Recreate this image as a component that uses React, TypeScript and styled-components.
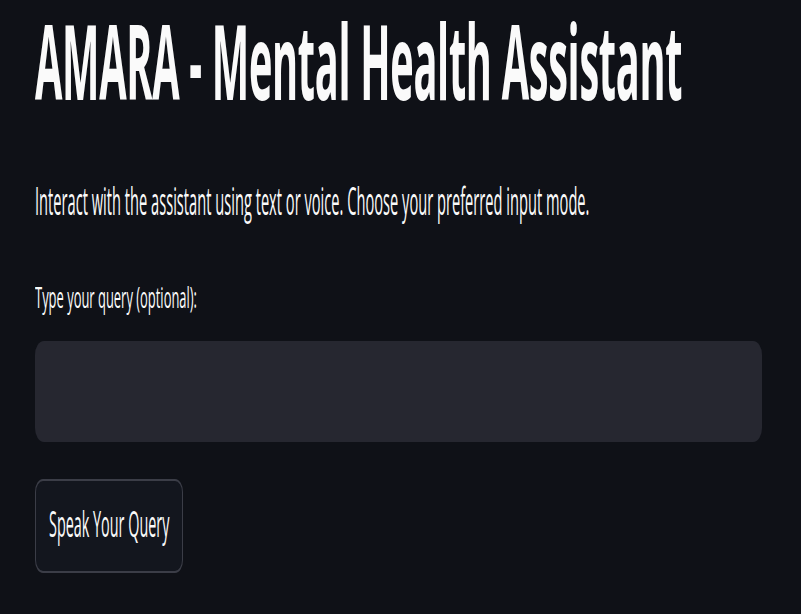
import React from "react";
import styled, { createGlobalStyle } from "styled-components";

const Global = createGlobalStyle`
  html, body { margin: 0; padding: 0; background: #0f1117; }
  body { font-family: "Open Sans", "Noto Sans", sans-serif; color: #fafafa; }
`;

const Page = styled.main`
  display: flex;
  flex-direction: column;
  align-items: flex-start;
  padding: 12px 39px 0 35px;
  min-height: 614px;
  box-sizing: border-box;
  background: #0f1117;
`;

const Stretch = styled.div<{ $size: number; $scale: number; $weight?: number }>`
  height: ${(p) => p.$size * p.$scale}px;
  font-size: ${(p) => p.$size}px;
  font-weight: ${(p) => p.$weight ?? 400};
  line-height: ${(p) => p.$size}px;
  white-space: nowrap;
  & > span {
    display: inline-block;
    transform: scaleY(${(p) => p.$scale});
    transform-origin: 0 0;
  }
`;

const Title = styled(Stretch)`
  color: #fafafa;
  letter-spacing: -0.3px;
`;

const Paragraph = styled(Stretch)`
  margin-top: 66px;
  color: #fafafa;
`;

const Label = styled(Stretch)`
  margin-top: 65px;
  color: #fafafa;
`;

const QueryInput = styled.textarea`
  margin-top: 28px;
  align-self: stretch;
  height: 101px;
  box-sizing: border-box;
  background: #262730;
  border: none;
  border-radius: 9px / 14px;
  outline: none;
  resize: none;
  color: #fafafa;
`;

const SpeakButton = styled.button`
  margin-top: 37px;
  width: 148px;
  height: 94px;
  box-sizing: border-box;
  display: flex;
  align-items: center;
  justify-content: flex-start;
  padding: 0 0 0 13px;
  background: #13161e;
  border-style: solid;
  border-color: #3b3d47;
  border-width: 2px 1px;
  border-radius: 8px / 13px;
  color: #fafafa;
  font-family: inherit;
  cursor: pointer;
`;

const ButtonText = styled(Stretch)`
  color: #fafafa;
`;

export default function App() {
  return (
    <>
      <Global />
      <Page>
        <Title $size={39.7} $scale={2.6} $weight={700}>
          <span>AMARA - Mental Health Assistant</span>
        </Title>
        <Paragraph $size={14.66} $scale={2.58}>
          <span>Interact with the assistant using text or voice. Choose your preferred input mode.</span>
        </Paragraph>
        <Label $size={12.95} $scale={2.2}>
          <span>Type your query (optional):</span>
        </Label>
        <QueryInput aria-label="Type your query (optional):" />
        <SpeakButton>
          <ButtonText $size={14.4} $scale={2.53}>
            <span>Speak Your Query</span>
          </ButtonText>
        </SpeakButton>
      </Page>
    </>
  );
}
